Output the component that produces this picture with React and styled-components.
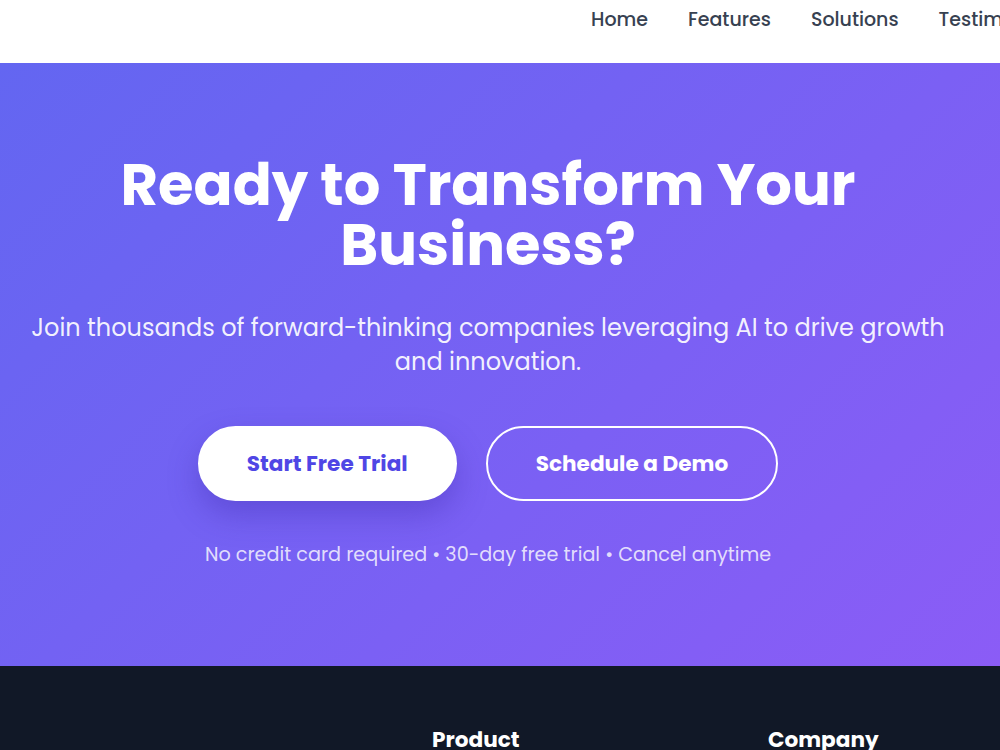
import React from 'react';
import styled, { createGlobalStyle } from 'styled-components';

const GlobalStyle = createGlobalStyle`
  * { box-sizing: border-box; }
  body {
    margin: 0;
    font-family: "Poppins", "DejaVu Sans", sans-serif;
    background: #ffffff;
    overflow-x: hidden;
  }
`;

const Header = styled.header`
  height: 63px;
  background: #ffffff;
  overflow: hidden;
  display: flex;
  align-items: flex-start;
  gap: 40px;
`;

const Brand = styled.div`
  flex: 0 0 551px;
`;

const Nav = styled.nav`
  display: flex;
  gap: 40px;
  padding-top: 8px;
  white-space: nowrap;
`;

const NavLink = styled.a`
  font-size: 19px;
  font-weight: 500;
  color: #374151;
  text-decoration: none;
  line-height: 24px;
`;

const Hero = styled.section`
  height: 603px;
  background: linear-gradient(135deg, #6366f1 0%, #8b5cf6 100%);
  color: #ffffff;
  display: flex;
  flex-direction: column;
  align-items: center;
  padding: 92px 36px 0 12px;
  text-align: center;
`;

const Title = styled.h1`
  margin: 0;
  font-size: 57.6px;
  line-height: 60px;
  font-weight: 700;
  max-width: 800px;
`;

const Lead = styled.p`
  margin: 36px 0 0;
  font-size: 24px;
  line-height: 33.6px;
  color: rgba(255, 255, 255, 0.92);
  max-width: 940px;
`;

const Actions = styled.div`
  display: flex;
  gap: 29px;
  margin-top: 48px;
`;

const Button = styled.button`
  height: 75px;
  padding: 0 ${(p) => (p.$outline ? 48 : 47)}px;
  border-radius: 999px;
  font-family: inherit;
  font-size: 21.6px;
  font-weight: 700;
  cursor: pointer;
  border: 2px solid #ffffff;
  background: ${(p) => (p.$outline ? 'transparent' : '#ffffff')};
  color: ${(p) => (p.$outline ? '#ffffff' : '#4f46e5')};
  box-shadow: ${(p) => (p.$outline ? 'none' : '0 14px 30px rgba(60, 40, 170, 0.35)')};
`;

const Note = styled.p`
  margin: 40px 0 0;
  font-size: 19.2px;
  line-height: 28px;
  color: rgba(255, 255, 255, 0.8);
`;

const Footer = styled.footer`
  background: #111827;
  color: #ffffff;
  padding-top: 61px;
  min-height: 200px;
  overflow: hidden;
`;

const FooterGrid = styled.div`
  display: grid;
  grid-template-columns: 400px repeat(3, 304px);
  column-gap: 32px;
`;

const ColTitle = styled.h4`
  margin: 0;
  font-size: 21.6px;
  line-height: 26px;
  font-weight: 700;
`;

export default function App() {
  return (
    <>
      <GlobalStyle />
      <Header>
        <Brand />
        <Nav>
          <NavLink href="#">Home</NavLink>
          <NavLink href="#">Features</NavLink>
          <NavLink href="#">Solutions</NavLink>
          <NavLink href="#">Testimonials</NavLink>
          <NavLink href="#">Pricing</NavLink>
        </Nav>
      </Header>
      <Hero>
        <Title>Ready to Transform Your Business?</Title>
        <Lead>
          Join thousands of forward-thinking companies leveraging AI to drive growth and innovation.
        </Lead>
        <Actions>
          <Button>Start Free Trial</Button>
          <Button $outline>Schedule a Demo</Button>
        </Actions>
        <Note>No credit card required • 30-day free trial • Cancel anytime</Note>
      </Hero>
      <Footer>
        <FooterGrid>
          <div />
          <ColTitle>Product</ColTitle>
          <ColTitle>Company</ColTitle>
          <ColTitle>Resources</ColTitle>
        </FooterGrid>
      </Footer>
    </>
  );
}
